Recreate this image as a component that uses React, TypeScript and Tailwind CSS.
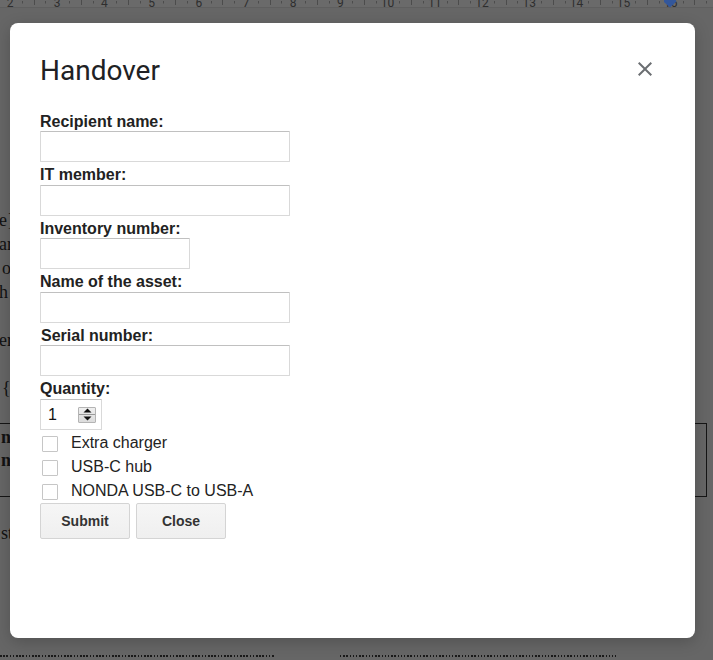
import React from 'react'

const NUMBERS = [2, 3, 4, 5, 6, 7, 8, 9, 10, 11, 12, 13, 14, 15, 16]

function Ruler() {
  const ticks = []
  for (let k = -4; k < 64; k++) {
    if (k % 4 === 0) continue
    const x = Math.round(10 + (47.2 * k) / 4) + 0.5
    const half = Math.abs(k % 4) === 2
    ticks.push(
      <line
        key={k}
        x1={x}
        x2={x}
        y1={half ? 0 : 1}
        y2={half ? 5 : 3.5}
        stroke="#4c4c4c"
        strokeWidth="1"
      />,
    )
  }
  return (
    <svg width="713" height="8" className="block shrink-0">
      <rect width="713" height="8" fill="#6a6a6a" />
      <line x1="0" y1="7.5" x2="713" y2="7.5" stroke="#5f5f5f" />
      {ticks}
      {NUMBERS.map((n, i) => (
        <text
          key={n}
          x={10 + 47.2 * i}
          y="6.5"
          textAnchor="middle"
          fontSize="12"
          fill="#2e2e2e"
          fontFamily="Roboto, sans-serif"
        >
          {n}
        </text>
      ))}
      <path d="M664 0 h12 v2 l-6 5.5 l-6 -5.5 z" fill="#33579b" />
    </svg>
  )
}

function Field({ label, wide = true, indent = false }: { label: string; wide?: boolean; indent?: boolean }) {
  return (
    <div className="flex flex-col mb-[4px]">
      <label className={`h-[18.6px] leading-[18.6px] text-[16px] font-bold text-[#222] ${indent ? 'pl-px' : ''}`}>
        {label}
      </label>
      <input
        type="text"
        className={`h-[31px] ${wide ? 'w-[250px]' : 'w-[150px]'} border border-[#d9d9d9] border-t-[#c0c0c0] rounded-[1px] px-2 text-[16px] outline-none`}
      />
    </div>
  )
}

function Check({ label }: { label: string }) {
  return (
    <label className="flex items-center h-[24px] text-[16px] text-[#222]">
      <input
        type="checkbox"
        className="appearance-none ml-[2px] mt-[2px] w-4 h-4 border border-[#c6c6c6] rounded-[1px] bg-white"
      />
      <span className="ml-[13px]">{label}</span>
    </label>
  )
}

function Spinner() {
  return (
    <div className="flex flex-col w-[18px] h-[16px] border border-[#b4b4b4] bg-gradient-to-b from-[#efefef] to-[#dcdcdc] rounded-[1px]">
      <div className="flex-1 flex items-center justify-center border-b border-[#9a9a9a]">
        <svg width="9" height="5" viewBox="0 0 9 5">
          <path d="M0.5 4.5 L4.5 0.5 L8.5 4.5 Z" fill="#111" />
        </svg>
      </div>
      <div className="flex-1 flex items-center justify-center">
        <svg width="9" height="5" viewBox="0 0 9 5">
          <path d="M0.5 0.5 L4.5 4.5 L8.5 0.5 Z" fill="#111" />
        </svg>
      </div>
    </div>
  )
}

export default function App() {
  return (
    <div className="relative w-[713px] h-[660px] overflow-hidden bg-[#666666] font-['Liberation_Sans',Arial,sans-serif]">
      <Ruler />

      {/* document behind the overlay */}
      <div className="flex flex-col w-[707px] font-['Liberation_Serif',serif] text-[18px] leading-[24px] text-[#121212]">
        <div className="mt-[200px] flex flex-col">
          <p className="-ml-px">{'e}'}</p>
          <p className="-ml-px">ar</p>
          <p className="ml-[2px]">o</p>
          <p className="-ml-px">h</p>
          <p className="h-[24px]"></p>
          <p className="-ml-px">er</p>
        </div>
        <p className="mt-[24px] ml-[2px]">{'{'}</p>
        <div className="mt-[23px] -ml-[21px] w-[728px] h-[74px] border border-[#151515] pt-[2px] font-bold">
          <p className="pl-[21px] leading-[23px]">nt</p>
          <p className="pl-[21px] leading-[23px]">nl</p>
        </div>
        <p className="mt-[24px] ml-px">st</p>
        <div className="mt-[110px] flex gap-[65px]">
          <div className="w-[275px] h-[2px] bg-[repeating-linear-gradient(90deg,#1a1a1a_0_1.5px,transparent_1.5px_3.2px)]" />
          <div className="w-[276px] h-[2px] bg-[repeating-linear-gradient(90deg,#1a1a1a_0_1.5px,transparent_1.5px_3.2px)]" />
        </div>
      </div>

      {/* dialog */}
      <div className="absolute left-[10px] top-[23px] w-[685px] h-[615px] rounded-[8px] bg-white shadow-[0_4px_16px_rgba(0,0,0,0.2)] pl-[30px] pr-[38px] pt-[32px]">
        <div className="flex items-start justify-between">
          <h2 className="text-[28px] leading-[32px] font-['Roboto',sans-serif] text-[#202124]">Handover</h2>
          <button className="mt-[2px] w-6 h-6 text-[#6b6e72]">
            <svg width="24" height="24" viewBox="0 0 24 24" fill="currentColor">
              <path d="M19 6.41L17.59 5 12 10.59 6.41 5 5 6.41 10.59 12 5 17.59 6.41 19 12 13.41 17.59 19 19 17.59 13.41 12z" />
            </svg>
          </button>
        </div>

        <form className="mt-[25.5px] flex flex-col">
          <Field label="Recipient name:" />
          <Field label="IT member:" />
          <Field label="Inventory number:" wide={false} />
          <Field label="Name of the asset:" />
          <Field label="Serial number:" indent />
          <div className="flex flex-col mb-[1px]">
            <label className="h-[18.6px] leading-[18.6px] text-[16px] font-bold text-[#222]">Quantity:</label>
            <div className="flex items-center w-[62px] h-[31px] border border-[#d9d9d9] border-t-[#c0c0c0] rounded-[1px] pl-[7px] pr-[5px]">
              <span className="text-[16px] text-[#111]">1</span>
              <div className="ml-auto">
                <Spinner />
              </div>
            </div>
          </div>
          <Check label="Extra charger" />
          <Check label="USB-C hub" />
          <Check label="NONDA USB-C to USB-A" />
          <div className="flex gap-[6px]">
            <button
              type="button"
              className="w-[90px] h-[36px] border border-[#d4d4d4] rounded-[2px] bg-gradient-to-b from-[#f6f6f6] to-[#efefef] text-[14px] font-bold text-[#333]"
            >
              Submit
            </button>
            <button
              type="button"
              className="w-[90px] h-[36px] border border-[#d4d4d4] rounded-[2px] bg-gradient-to-b from-[#f6f6f6] to-[#efefef] text-[14px] font-bold text-[#333]"
            >
              Close
            </button>
          </div>
        </form>
      </div>
    </div>
  )
}
